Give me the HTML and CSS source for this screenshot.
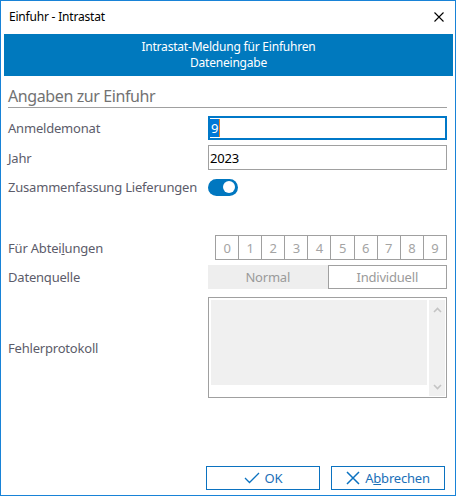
FILE: index.html
```html
<!DOCTYPE html>
<html lang="de">
<head>
  <meta charset="UTF-8">
  <title>Einfuhr - Intrastat</title>
  <link rel="stylesheet" href="styles.css">
</head>
<body>
<div class="window">
  <div class="titlebar">
    <span class="title">Einfuhr - Intrastat</span>
    <svg class="close" width="10" height="10" viewBox="0 0 10 10">
      <path d="M0.5 0.5 L9.5 9.5 M9.5 0.5 L0.5 9.5" stroke="#000" stroke-width="1.1" fill="none"/>
    </svg>
  </div>

  <div class="banner">
    <div>Intrastat-Meldung für Einfuhren</div>
    <div>Dateneingabe</div>
  </div>

  <div class="content">
    <div class="section-title">Angaben zur Einfuhr</div>

    <div class="row row-month">
      <span class="label">Anmeldemonat</span>
      <div class="input focused"><span class="selected">9</span><span class="caret"></span></div>
    </div>

    <div class="row row-year">
      <span class="label">Jahr</span>
      <div class="input">2023</div>
    </div>

    <div class="row row-toggle">
      <span class="label">Zusammenfassung Lieferungen</span>
      <div class="toggle"><span class="knob"></span></div>
    </div>

    <div class="row row-dept">
      <span class="label">Für Abtei<u>l</u>ungen</span>
      <div class="digits">
        <span>0</span><span>1</span><span>2</span><span>3</span><span>4</span>
        <span>5</span><span>6</span><span>7</span><span>8</span><span>9</span>
      </div>
    </div>

    <div class="row row-source">
      <span class="label">Datenquelle</span>
      <div class="segments">
        <span class="seg active">Normal</span>
        <span class="seg">Individuell</span>
      </div>
    </div>

    <div class="row row-log">
      <span class="label">Fehlerprotokoll</span>
      <div class="logbox">
        <div class="log-area"></div>
        <div class="scrollbar">
          <svg width="9" height="6" viewBox="0 0 9 6"><path d="M1 5 L4.5 1.5 L8 5" stroke="#c4c4c4" stroke-width="1.6" fill="none"/></svg>
          <svg width="9" height="6" viewBox="0 0 9 6"><path d="M1 1 L4.5 4.5 L8 1" stroke="#c4c4c4" stroke-width="1.6" fill="none"/></svg>
        </div>
      </div>
    </div>
  </div>

  <div class="footer">
    <button class="btn">
      <svg width="16" height="12" viewBox="0 0 16 12"><path d="M1 6 L5.5 10.5 L15 1" stroke="#0b72c0" stroke-width="1.3" fill="none"/></svg>
      <span>OK</span>
    </button>
    <button class="btn">
      <svg width="14" height="14" viewBox="0 0 14 14"><path d="M1 1 L13 13 M13 1 L1 13" stroke="#0b72c0" stroke-width="1.5" fill="none"/></svg>
      <span>A<u>b</u>brechen</span>
    </button>
  </div>
</div>
</body>
</html>
```

FILE: styles.css
```css
* {
    margin: 0;
    padding: 0;
    box-sizing: border-box;
}

body {
    background: #fff;
    font-family: "Noto Sans", "Open Sans", sans-serif;
    font-size: 13px;
    letter-spacing: -0.2px;
}

.window {
    width: 456px;
    height: 496px;
    border: 1px solid #1883d7;
    display: flex;
    flex-direction: column;
}

.titlebar {
    height: 33px;
    display: flex;
    align-items: center;
    justify-content: space-between;
    padding: 0 11px 2px 8px;
}

.title {
    font-size: 12px;
    color: #000;
}

.banner {
    margin: 0 2px 0 3px;
    height: 42px;
    background: #0079be;
    color: #fff;
    font-size: 12px;
    line-height: 16px;
    text-align: center;
    display: flex;
    flex-direction: column;
    justify-content: center;
}

.content {
    padding: 0 8px 0 7px;
    flex: 1;
}

.section-title {
    margin-top: 10px;
    font-size: 16px;
    line-height: 20px;
    letter-spacing: -0.4px;
    color: #727272;
    padding-bottom: 1px;
    border-bottom: 1px solid #a0a0a0;
}

.row {
    display: grid;
    grid-template-columns: 200px 1fr;
    align-items: center;
}

.label {
    color: #5c5c6a;
    white-space: nowrap;
}

.row-month { margin-top: 8px; height: 24px; }
.row-year { margin-top: 5px; height: 25px; }
.row-toggle { margin-top: 8px; height: 17px; }
.row-dept { margin-top: 40px; height: 25px; }
.row-source { margin-top: 5px; height: 24px; }
.row-log { margin-top: 8px; height: 101px; }

.input {
    height: 100%;
    border: 1px solid #a0a0a0;
    display: flex;
    align-items: center;
    padding-left: 1px;
    color: #000;
}

.input.focused {
    border: 2px solid #0078c8;
    padding-left: 0;
}

.selected {
    background: #0078d7;
    color: #fff;
    padding: 0 1px;
    line-height: 18px;
}

.caret {
    width: 1px;
    height: 18px;
    background: #f08020;
}

.toggle {
    width: 30px;
    height: 17px;
    border-radius: 9px;
    background: #0077c0;
    display: flex;
    align-items: center;
    justify-content: flex-end;
    padding-right: 3px;
}

.knob {
    width: 12px;
    height: 12px;
    border-radius: 50%;
    background: #fff;
}

.digits {
    display: flex;
    margin-left: 7px;
    height: 100%;
    border: 1px solid #a0a0a0;
    border-right: none;
}

.digits span {
    flex: 1;
    border-right: 1px solid #a0a0a0;
    display: flex;
    align-items: center;
    justify-content: center;
    color: #a4a4a4;
}

.segments {
    display: flex;
    height: 100%;
}

.seg {
    flex: 1;
    display: flex;
    align-items: center;
    justify-content: center;
    color: #9a9a9a;
    border: 1px solid #a0a0a0;
}

.seg.active {
    background: #eeeeee;
    border-color: #eeeeee;
}

.logbox {
    height: 100%;
    border: 1px solid #a0a0a0;
    padding: 2px 1px 1px 2px;
    display: flex;
    gap: 2px;
}

.log-area {
    flex: 1;
    height: 85px;
    background: #f0f0f0;
}

.scrollbar {
    width: 16px;
    background: #f0f0f0;
    display: flex;
    flex-direction: column;
    justify-content: space-between;
    align-items: center;
    padding: 7px 0 6px;
}

.footer {
    display: flex;
    justify-content: flex-end;
    gap: 11px;
    padding: 0 10px 5px 0;
}

.btn {
    width: 114px;
    height: 24px;
    border: 1px solid #0b72c0;
    background: #fff;
    color: #1a6fb8;
    font-family: "Noto Sans", "Open Sans", sans-serif;
    font-size: 13px;
    letter-spacing: -0.2px;
    display: flex;
    align-items: center;
    justify-content: center;
    gap: 5px;
}
```
